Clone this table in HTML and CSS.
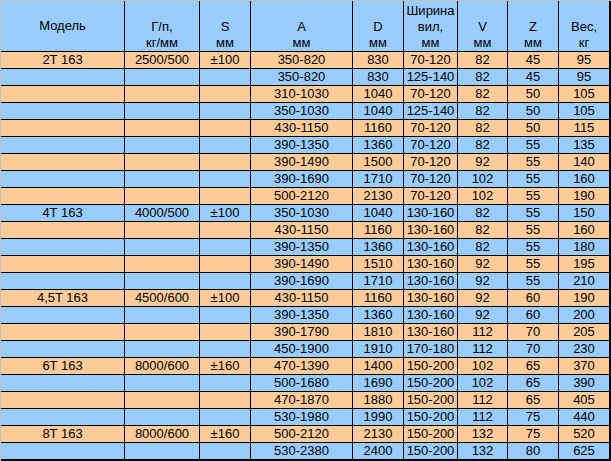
FILE: index.html
```html
<!DOCTYPE html>
<html lang="ru">
<head>
<meta charset="utf-8">
<title>Таблица</title>
<link rel="stylesheet" href="styles.css">
</head>
<body>
<div class="sheet">
  <div class="row head">
    <div class="c mid">Модель</div>
    <div class="c">Г/п,<br>кг/мм</div>
    <div class="c">S<br>мм</div>
    <div class="c">A<br>мм</div>
    <div class="c">D<br>мм</div>
    <div class="c">Ширина<br>вил,<br>мм</div>
    <div class="c">V<br>мм</div>
    <div class="c">Z<br>мм</div>
    <div class="c">Вес,<br>кг</div>
  </div>
  <div class="row o"><div class="c">2T 163</div><div class="c">2500/500</div><div class="c">±100</div><div class="c">350-820</div><div class="c">830</div><div class="c">70-120</div><div class="c">82</div><div class="c">45</div><div class="c">95</div></div>
  <div class="row b"><div class="c"></div><div class="c"></div><div class="c"></div><div class="c">350-820</div><div class="c">830</div><div class="c">125-140</div><div class="c">82</div><div class="c">45</div><div class="c">95</div></div>
  <div class="row o"><div class="c"></div><div class="c"></div><div class="c"></div><div class="c">310-1030</div><div class="c">1040</div><div class="c">70-120</div><div class="c">82</div><div class="c">50</div><div class="c">105</div></div>
  <div class="row b"><div class="c"></div><div class="c"></div><div class="c"></div><div class="c">350-1030</div><div class="c">1040</div><div class="c">125-140</div><div class="c">82</div><div class="c">50</div><div class="c">105</div></div>
  <div class="row o"><div class="c"></div><div class="c"></div><div class="c"></div><div class="c">430-1150</div><div class="c">1160</div><div class="c">70-120</div><div class="c">82</div><div class="c">50</div><div class="c">115</div></div>
  <div class="row b"><div class="c"></div><div class="c"></div><div class="c"></div><div class="c">390-1350</div><div class="c">1360</div><div class="c">70-120</div><div class="c">82</div><div class="c">55</div><div class="c">135</div></div>
  <div class="row o"><div class="c"></div><div class="c"></div><div class="c"></div><div class="c">390-1490</div><div class="c">1500</div><div class="c">70-120</div><div class="c">92</div><div class="c">55</div><div class="c">140</div></div>
  <div class="row b"><div class="c"></div><div class="c"></div><div class="c"></div><div class="c">390-1690</div><div class="c">1710</div><div class="c">70-120</div><div class="c">102</div><div class="c">55</div><div class="c">160</div></div>
  <div class="row o"><div class="c"></div><div class="c"></div><div class="c"></div><div class="c">500-2120</div><div class="c">2130</div><div class="c">70-120</div><div class="c">102</div><div class="c">55</div><div class="c">190</div></div>
  <div class="row b"><div class="c">4T 163</div><div class="c">4000/500</div><div class="c">±100</div><div class="c">350-1030</div><div class="c">1040</div><div class="c">130-160</div><div class="c">82</div><div class="c">55</div><div class="c">150</div></div>
  <div class="row o"><div class="c"></div><div class="c"></div><div class="c"></div><div class="c">430-1150</div><div class="c">1160</div><div class="c">130-160</div><div class="c">82</div><div class="c">55</div><div class="c">160</div></div>
  <div class="row b"><div class="c"></div><div class="c"></div><div class="c"></div><div class="c">390-1350</div><div class="c">1360</div><div class="c">130-160</div><div class="c">82</div><div class="c">55</div><div class="c">180</div></div>
  <div class="row o"><div class="c"></div><div class="c"></div><div class="c"></div><div class="c">390-1490</div><div class="c">1510</div><div class="c">130-160</div><div class="c">92</div><div class="c">55</div><div class="c">195</div></div>
  <div class="row b"><div class="c"></div><div class="c"></div><div class="c"></div><div class="c">390-1690</div><div class="c">1710</div><div class="c">130-160</div><div class="c">92</div><div class="c">55</div><div class="c">210</div></div>
  <div class="row o"><div class="c">4,5T 163</div><div class="c">4500/600</div><div class="c">±100</div><div class="c">430-1150</div><div class="c">1160</div><div class="c">130-160</div><div class="c">92</div><div class="c">60</div><div class="c">190</div></div>
  <div class="row b"><div class="c"></div><div class="c"></div><div class="c"></div><div class="c">390-1350</div><div class="c">1360</div><div class="c">130-160</div><div class="c">92</div><div class="c">60</div><div class="c">200</div></div>
  <div class="row o"><div class="c"></div><div class="c"></div><div class="c"></div><div class="c">390-1790</div><div class="c">1810</div><div class="c">130-160</div><div class="c">112</div><div class="c">70</div><div class="c">205</div></div>
  <div class="row b"><div class="c"></div><div class="c"></div><div class="c"></div><div class="c">450-1900</div><div class="c">1910</div><div class="c">170-180</div><div class="c">112</div><div class="c">70</div><div class="c">230</div></div>
  <div class="row o"><div class="c">6T 163</div><div class="c">8000/600</div><div class="c">±160</div><div class="c">470-1390</div><div class="c">1400</div><div class="c">150-200</div><div class="c">102</div><div class="c">65</div><div class="c">370</div></div>
  <div class="row b"><div class="c"></div><div class="c"></div><div class="c"></div><div class="c">500-1680</div><div class="c">1690</div><div class="c">150-200</div><div class="c">102</div><div class="c">65</div><div class="c">390</div></div>
  <div class="row o"><div class="c"></div><div class="c"></div><div class="c"></div><div class="c">470-1870</div><div class="c">1880</div><div class="c">150-200</div><div class="c">112</div><div class="c">65</div><div class="c">405</div></div>
  <div class="row b"><div class="c"></div><div class="c"></div><div class="c"></div><div class="c">530-1980</div><div class="c">1990</div><div class="c">150-200</div><div class="c">112</div><div class="c">75</div><div class="c">440</div></div>
  <div class="row o"><div class="c">8T 163</div><div class="c">8000/600</div><div class="c">±160</div><div class="c">500-2120</div><div class="c">2130</div><div class="c">150-200</div><div class="c">132</div><div class="c">75</div><div class="c">520</div></div>
  <div class="row b last"><div class="c"></div><div class="c"></div><div class="c"></div><div class="c">530-2380</div><div class="c">2400</div><div class="c">150-200</div><div class="c">132</div><div class="c">80</div><div class="c">625</div></div>
</div>
</body>
</html>
```
FILE: styles.css
```css
html, body {
  margin: 0;
  padding: 0;
}
body {
  background: #c0c0c0;
  padding: 1px 0 0 1px;
  font-family: "Liberation Sans", Arial, sans-serif;
  font-size: 13px;
  color: #000;
}
.sheet {
  width: 610px;
}
.row {
  display: grid;
  grid-template-columns: 124px 75px 51px 102px 51px 54px 50px 51px 52px;
  height: 17px;
}
.row.o { background: #ffcc99; }
.row.b { background: #99ccff; }
.row.head {
  background: #99ccff;
  height: 51px;
}
.row.last { height: 18px; }
.c {
  box-sizing: border-box;
  border-right: 1px solid #000;
  border-bottom: 1px solid #000;
  display: flex;
  align-items: center;
  justify-content: center;
  text-align: center;
  line-height: 16px;
  white-space: nowrap;
  overflow: hidden;
}
.c:last-child { border-right-width: 2px; }
.row.last .c { border-bottom-width: 2px; }
.head .c { align-items: flex-end; }
.head .c.mid { align-items: center; }
```
